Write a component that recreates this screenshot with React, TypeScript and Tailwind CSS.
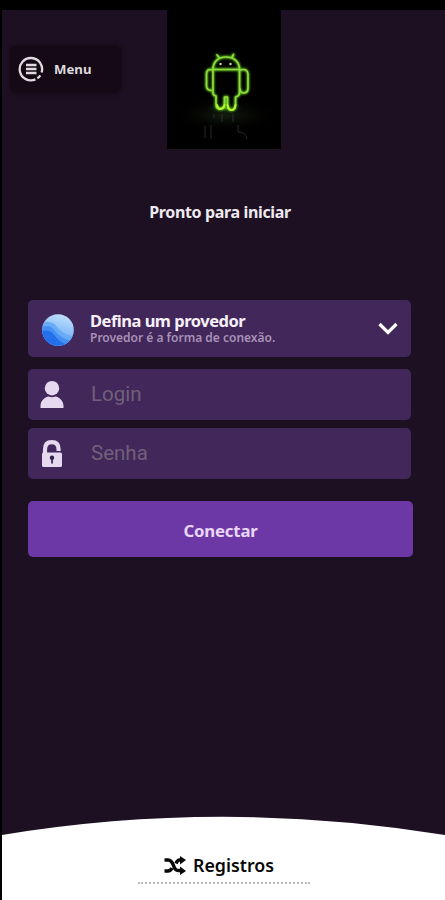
import type { ReactNode } from 'react';

// * neon robot on a dark reflective floor
function RobotLogo() {
  return (
    <svg viewBox="0 0 114 139" className="block h-[139px] w-[114px] bg-black" fill="none">
      <defs>
        <radialGradient id="floor">
          <stop offset="0" stopColor="#5cb80f" stopOpacity="0.9" />
          <stop offset="0.4" stopColor="#244a0e" stopOpacity="0.5" />
          <stop offset="1" stopColor="#000" stopOpacity="0" />
        </radialGradient>
        <radialGradient id="ground">
          <stop offset="0" stopColor="#1a2414" stopOpacity="0.8" />
          <stop offset="1" stopColor="#000" stopOpacity="0" />
        </radialGradient>
        <filter id="glow" x="-30%" y="-30%" width="160%" height="160%">
          <feGaussianBlur stdDeviation="1.1" />
        </filter>
        <g id="robot" strokeLinecap="round" strokeLinejoin="round">
          <path d="M46 59.500C46 52 51 47 59 47S72.500 52 72.500 59.500z" />
          <path d="M52 47.500L50 45M65 47.500l1.500-3" />
          <path d="M46 60v23q0 2.500 3 3v8q0 5 4.500 5t4-5V87h3v8q0 5 4 5t4-5v-8q4-1 4-4V60" />
          <path d="M46 60q-6.500-2-6.500 4v12q0 4 4.500 4.500M73 60q7.500-2 8 4v14q0 5-4.500 5-3 0-3.500-4" />
        </g>
      </defs>
      <ellipse cx="58" cy="105" rx="54" ry="18" fill="url(#ground)" />
      <ellipse cx="58" cy="98" rx="20" ry="7" fill="url(#floor)" />
      <use href="#robot" stroke="#5cb51a" strokeWidth="2.800" filter="url(#glow)" />
      <use href="#robot" stroke="#8fdc3e" strokeWidth="1.700" />
      <path d="M50 95q1 4 3.500 4t4-4M60.500 95q1 5 4 5t4-5" stroke="#b2f536" strokeWidth="2" strokeLinecap="round" />
      <circle cx="53.500" cy="54" r="1.200" fill="#b5e6a5" />
      <circle cx="63.500" cy="54" r="1.200" fill="#b5e6a5" />
      <path d="M47 104v4M55 104v8M66 104v8M38 116v12M44 115v14M71 115v7q8 0 9 7" stroke="#39423a" strokeWidth="1" opacity="0.65" />
    </svg>
  );
}

function MenuIcon() {
  return (
    <svg viewBox="0 0 26 26" className="-mt-px size-[26px] shrink-0" fill="none" stroke="#dedade">
      <path d="M17.500 23.400A11.200 11.200 0 1 1 23.600 16.500M19.300 22.300q2-1.300 3-3" strokeWidth="2.300" />
      <path d="M8 9h10.500M8 13h10.500M8 17h10.500" strokeWidth="2.700" />
    </svg>
  );
}

function ProviderIcon() {
  return (
    <svg viewBox="0 0 32 32" className="size-8">
      <defs>
        <linearGradient id="globe" x1="0.7" y1="0" x2="0.4" y2="1">
          <stop offset="0" stopColor="#c2e0fa" />
          <stop offset="0.5" stopColor="#8cc0f8" />
          <stop offset="1" stopColor="#5b9ff6" />
        </linearGradient>
        <clipPath id="disc">
          <circle cx="16" cy="16" r="15.800" />
        </clipPath>
      </defs>
      <g clipPath="url(#disc)">
        <path d="M0 0h32v32H0z" fill="url(#globe)" />
        <path d="M0 9Q10 6 15 13t17 10v9H0z" fill="#6aabf8" />
        <path d="M0 13Q8 10 13 17t17 10v5H0z" fill="#4590f5" />
        <path d="M0 17q8-2 13 5t14 9v1H0z" fill="#2370ea" />
      </g>
    </svg>
  );
}

function UserIcon() {
  return (
    <svg viewBox="0 0 24 27" className="h-[27px] w-6" fill="#e6d8ef">
      <circle cx="12" cy="7.200" r="7.200" />
      <path d="M.5 27v-2C.5 19.500 5 16 8.500 15.500q3.500 1.500 7 0C19 16 23.500 19.500 23.500 25v2z" />
    </svg>
  );
}

function LockIcon() {
  return (
    <svg viewBox="0 0 22 27" className="h-[27px] w-[22px]">
      <path d="M4 13V9.500q0-7.300 6.800-7.300t6.800 7.300V11" fill="none" stroke="#e6d8ef" strokeWidth="4.200" />
      <rect x="1" y="12.500" width="20" height="14.500" rx="1.500" fill="#e6d8ef" />
      <circle cx="11" cy="17.700" r="2.200" fill="#32204a" />
      <path d="M10.200 18h1.700v5.500h-1.700z" fill="#32204a" />
    </svg>
  );
}

function ShuffleIcon() {
  return (
    <svg viewBox="0 0 22 19" className="mr-[7px] h-[19px] w-[22px] shrink-0" fill="none" stroke="#080808" strokeWidth="3.500">
      <path d="M.5 4H4q3.500 0 5.500 5.500t5 5H17M.5 15H4q2.500 0 4-3M12 7.500Q13.500 4 15.500 4H17" />
      <path d="M16 0l6 4-6 4.500zM16 10.500l6 4.500-6 4z" fill="#080808" stroke="none" />
    </svg>
  );
}

// * input row w/ leading icon
function Field({ icon, label, type }: { icon: ReactNode; label: string; type: string }) {
  return (
    <label className="flex h-[51px] w-[383px] items-center rounded-[5px] bg-[#42275a]">
      <span className="flex w-12 shrink-0 justify-center">{icon}</span>
      <input
        type={type}
        placeholder={label}
        className="ml-[15px] w-[280px] bg-transparent font-[Roboto,sans-serif] text-[20.5px] text-white outline-none placeholder:text-[#70607a]"
      />
    </label>
  );
}

export default function App() {
  return (
    <div className="flex h-[900px] w-[445px] flex-col overflow-hidden border-t-[10px] border-l-2 border-black bg-[#1c1022] font-['Noto_Sans',sans-serif]">
      {/* Top section (menu + logo) */}
      <header className="flex h-[139px] shrink-0 items-start">
        <button className="mt-9 ml-2 flex h-[47px] w-[111px] items-center rounded-[6px] bg-[#140914] pl-2 text-[13.2px] font-bold text-[#dedade] shadow-[0_0_4px_#140914]">
          <MenuIcon />
          <span className="ml-[10px]">Menu</span>
        </button>
        <div className="ml-[46px]">
          <RobotLogo />
        </div>
      </header>

      <p className="mt-[51px] w-[436px] shrink-0 text-center text-[16px] leading-6 font-bold tracking-[-0.36px] text-[#efeaf0]">
        Pronto para iniciar
      </p>

      <form className="mt-[76px] flex shrink-0 flex-col pl-[26px]" onSubmit={(e) => e.preventDefault()}>
        <button type="button" className="flex h-[57px] w-[383px] items-center rounded-[5px] bg-[#42275a] text-left">
          <span className="mt-[3px] ml-[14px]">
            <ProviderIcon />
          </span>
          <span className="ml-4 flex flex-1 flex-col">
            <span className="text-[16.5px] leading-[18px] font-bold tracking-[-0.5px] text-[#f7f0f8]">Defina um provedor</span>
            <span className="text-[12px] leading-[15px] font-semibold text-[#a991b7]">Provedor é a forma de conexão.</span>
          </span>
          <svg viewBox="0 0 20 13" className="mr-[13px] h-[13px] w-5" fill="none">
            <path d="M1.500 2l8.500 8.500L18.500 2" stroke="#fff" strokeWidth="3.200" />
          </svg>
        </button>

        <div className="mt-3 flex flex-col gap-2">
          <Field icon={<UserIcon />} label="Login" type="text" />
          <Field icon={<LockIcon />} label="Senha" type="password" />
        </div>

        <button className="mt-[22px] h-14 w-[385px] rounded-[5px] bg-[#6c38a6] pt-[3px] text-[16.8px] font-bold tracking-[-0.2px] text-[#ead6f6]">
          Conectar
        </button>
      </form>

      {/* Bottom sheet w/ curved top edge */}
      <footer className="mt-auto flex h-[84px] shrink-0 flex-col">
        <svg viewBox="0 0 443 19" className="block h-[19px] w-[443px] shrink-0" preserveAspectRatio="none">
          <path d="M0 19Q110 .8 221 .8T443 19z" fill="#fff" />
        </svg>
        <div className="flex flex-1 flex-col bg-white pl-[136px]">
          <div className="mt-[18px] flex h-6 w-[172px] items-center pl-[26px] text-[17.8px] font-semibold text-[#080808]">
            <ShuffleIcon />
            <span>Registros</span>
          </div>
          <div className="mt-[5px] w-[172px] border-t-2 border-dotted border-[#b9b9be]" />
        </div>
      </footer>
    </div>
  );
}
